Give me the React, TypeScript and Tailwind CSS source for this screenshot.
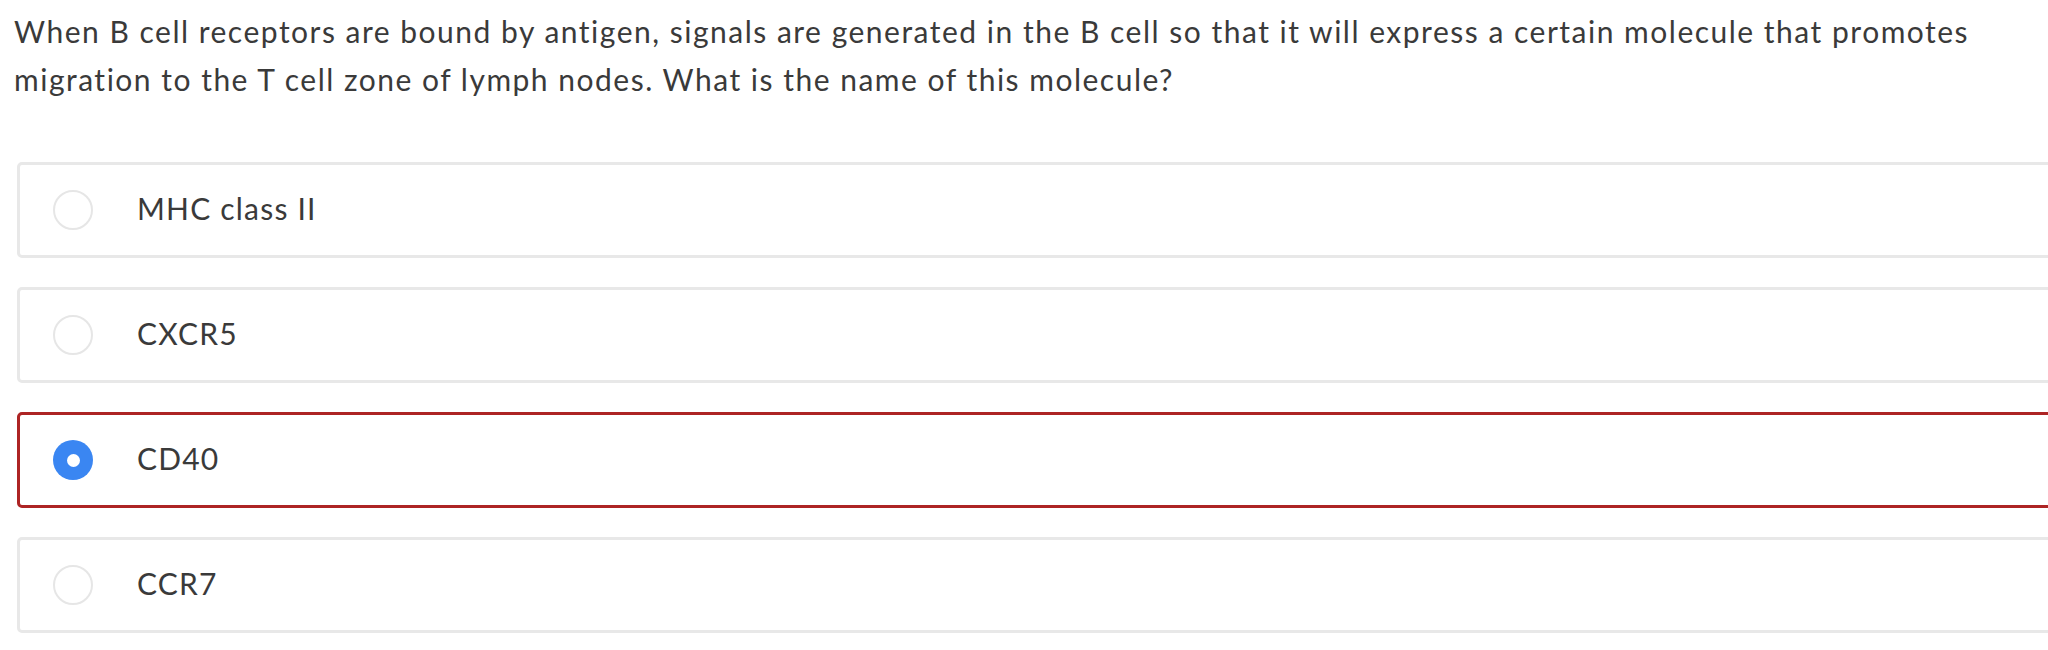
import React, { useState } from 'react';

interface Choice {
  id: string;
  label: string;
}

const choices: Choice[] = [
  { id: 'a', label: 'MHC class II' },
  { id: 'b', label: 'CXCR5' },
  { id: 'c', label: 'CD40' },
  { id: 'd', label: 'CCR7' },
];

const App: React.FC = () => {
  const [selected, setSelected] = useState('c');

  return (
    <div className="w-[2048px] h-[650px] overflow-hidden bg-white text-[#3a3a3a] font-['Lato','Liberation_Sans',sans-serif]">
      {/* Question */}
      <p className="pl-[14px] pt-[7px] pr-[40px] text-[30px] leading-[48px] tracking-[1.5px]">
        When B cell receptors are bound by antigen, signals are generated in the B cell so that it will express a certain molecule that promotes migration to the T cell zone of lymph nodes. What is the name of this molecule?
      </p>

      {/* Options */}
      <div className="mt-[59px] ml-[17px] mr-[-40px] flex flex-col gap-[29px]">
        {choices.map(choice => {
          const isSelected = choice.id === selected;
          return (
            <button
              key={choice.id}
              onClick={() => setSelected(choice.id)}
              className={`h-[96px] flex items-center text-left rounded-[5px] bg-white ${
                isSelected ? 'border-[3px] border-[#ad2424]' : 'border-[3px] border-[#e8e8e8]'
              }`}
            >
              {isSelected ? (
                <span className="ml-[33px] w-[40px] h-[40px] rounded-full bg-[#3a86f2] flex items-center justify-center shrink-0">
                  <span className="w-[13px] h-[13px] rounded-full bg-white" />
                </span>
              ) : (
                <span className="ml-[33px] w-[40px] h-[40px] rounded-full border-2 border-[#e6e6e6] shrink-0" />
              )}
              <span className="ml-[44px] pb-[4px] text-[30px] leading-none tracking-[1.2px] text-[#3a3a3a]">{choice.label}</span>
            </button>
          );
        })}
      </div>
    </div>
  );
};

export default App;
